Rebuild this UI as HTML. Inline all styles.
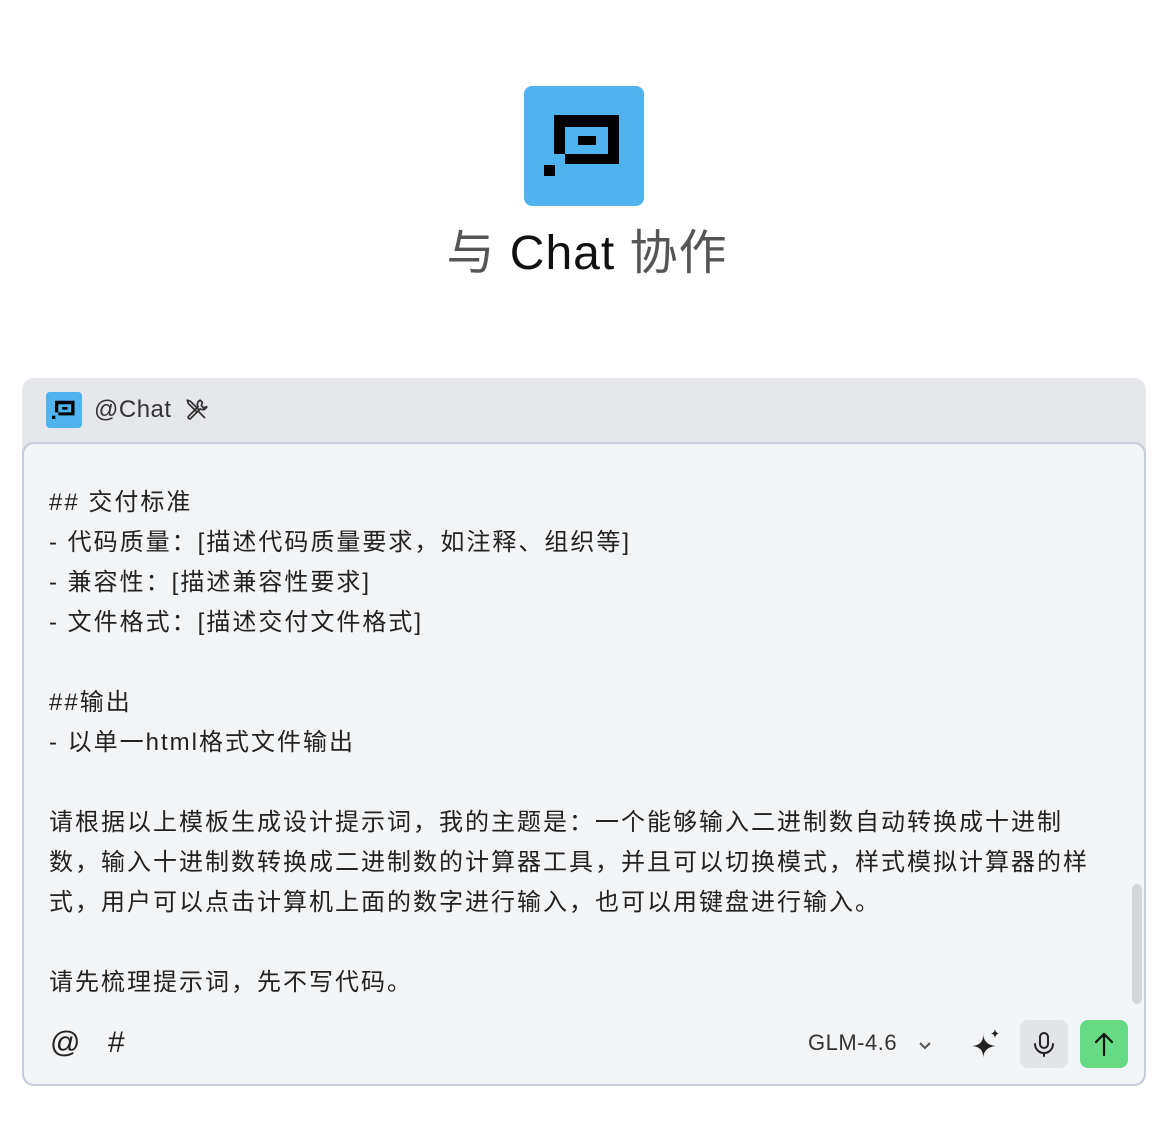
<!DOCTYPE html>
<html><head><meta charset="utf-8"><style>
body{margin:0;width:1174px;height:1122px;background:#fff;font-family:"Liberation Sans","Noto Sans CJK SC",sans-serif;position:relative;overflow:hidden}
.logo{position:absolute;left:524px;top:86px;width:120px;height:120px;border-radius:8px;background:#4fb3f0}
.title{position:absolute;left:0;width:1174px;top:224px;text-align:center;font-size:48px;color:#555;line-height:60px;letter-spacing:1px}
.title b{font-weight:normal;color:#111}
.card{position:absolute;left:22px;top:378px;width:1124px;height:708px;background:#e5e7eb;border-radius:12px}
.hd{position:absolute;left:24px;top:14px;height:36px;display:flex;align-items:center;font-size:24px;color:#333;letter-spacing:0.5px}
.body{position:absolute;left:0;top:64px;width:1120px;height:640px;background:#f3f4f6;border:2px solid #c5cbd9;border-radius:12px}
.txt{position:absolute;left:25px;top:39px;width:1052px;font-size:24px;line-height:40px;color:#222;white-space:pre-wrap;letter-spacing:2px}
.sb{position:absolute;right:2px;top:440px;width:10px;height:120px;background:#d4d6da;border-radius:5px}
</style></head><body>
<div class="logo"><svg width="120" height="120" viewBox="0 0 120 120"><path fill-rule="evenodd" d="M30 29H95V78H41V68H30Z M41 41H84V68H41Z" fill="#000"/><rect x="54" y="50" width="18" height="9" fill="#000"/><rect x="20" y="79" width="11" height="11" fill="#000"/></svg></div>
<div class="title">与 <b>Chat</b> 协作</div>
<div class="card">
<div class="hd"><svg width="36" height="36" viewBox="0 0 120 120" style="border-radius:4px;background:#4fb3f0;margin-right:12px"><path fill-rule="evenodd" d="M30 29H95V78H41V68H30Z M41 41H84V68H41Z" fill="#000"/><rect x="54" y="50" width="18" height="9"/><rect x="20" y="79" width="11" height="11"/></svg>@Chat<svg width="26" height="26" viewBox="0 0 24 24" style="margin-left:12px" fill="none" stroke="#333" stroke-width="1.6" stroke-linecap="round" stroke-linejoin="round"><path d="M3 3l3 1 8 8-2 2-8-8z"/><path d="M14 14l5 5"/><path d="M15 3a4 4 0 0 0-2 6L4 18a1.5 1.5 0 0 0 2 2l9-9a4 4 0 0 0 6-2l-3 1-2-2 1-3z"/></svg></div>
<div class="body">
<div class="txt">## 交付标准
- 代码质量：[描述代码质量要求，如注释、组织等]
- 兼容性：[描述兼容性要求]
- 文件格式：[描述交付文件格式]

##输出
- 以单一html格式文件输出

请根据以上模板生成设计提示词，我的主题是：一个能够输入二进制数自动转换成十进制数，输入十进制数转换成二进制数的计算器工具，并且可以切换模式，样式模拟计算器的样式，用户可以点击计算机上面的数字进行输入，也可以用键盘进行输入。

请先梳理提示词，先不写代码。</div>
<div class="sb"></div>
<div style="position:absolute;left:26px;top:582px;font-size:30px;color:#222">@</div>
<div style="position:absolute;left:84px;top:582px;font-size:30px;color:#222">#</div>
<div style="position:absolute;left:784px;top:586px;font-size:22px;color:#333;letter-spacing:0.5px">GLM-4.6</div>
<svg style="position:absolute;left:892px;top:592px" width="18" height="18" viewBox="0 0 18 18"><path d="M4 7l5 5 5-5" fill="none" stroke="#555" stroke-width="2"/></svg>
<svg style="position:absolute;left:944px;top:584px" width="34" height="34" viewBox="0 0 34 34"><path d="M15 6Q16 17 4 18Q16 19 15 30Q16 19 28 18Q16 17 15 6Z" fill="#222"/><path d="M27 1Q27.5 5 31 5.5Q27.5 6 27 10Q26.5 6 23 5.5Q26.5 5 27 1Z" fill="#222"/></svg>
<div style="position:absolute;left:996px;top:576px;width:48px;height:48px;background:#e3e4e7;border-radius:8px"><svg width="48" height="48" viewBox="0 0 48 48" fill="none" stroke="#222" stroke-width="2" stroke-linecap="round"><rect x="20" y="13" width="8" height="15" rx="4"/><path d="M15 24a9 9 0 0 0 18 0M24 33v3"/></svg></div>
<div style="position:absolute;left:1056px;top:576px;width:48px;height:48px;background:#66db84;border-radius:8px"><svg width="48" height="48" viewBox="0 0 48 48" fill="none" stroke="#111" stroke-width="2.2" stroke-linecap="round"><path d="M24 35V14M16 22l8-8 8 8"/></svg></div>
</div>
</div>
</body></html>
